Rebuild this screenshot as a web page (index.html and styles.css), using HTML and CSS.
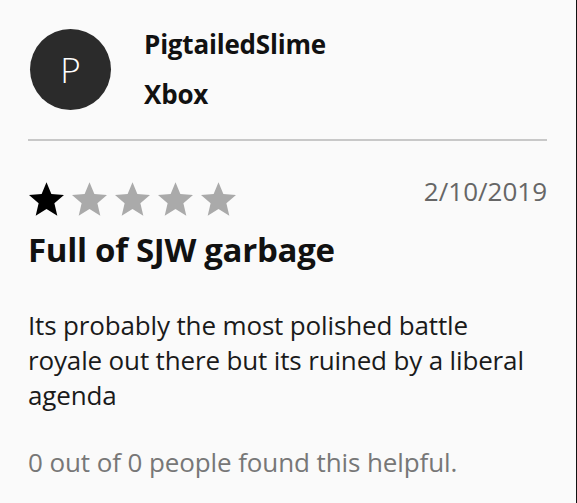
FILE: index.html
```html
<!DOCTYPE html>
<html lang="en">
<head>
  <meta charset="UTF-8">
  <title>Review</title>
  <link rel="stylesheet" href="styles.css">
</head>
<body>

<div class="review">
  <div class="author">
    <div class="avatar">P</div>
    <div class="author-info">
      <div class="name">PigtailedSlime</div>
      <div class="platform">Xbox</div>
    </div>
  </div>

  <hr class="divider">

  <div class="meta">
    <div class="stars">
      <svg class="star on" viewBox="0.489 0 19.022 18.09"><polygon points="10,0 12.645,6.359 19.511,6.91 14.28,11.391 15.878,18.09 10,14.5 4.122,18.09 5.72,11.391 0.489,6.91 7.355,6.359"/></svg>
      <svg class="star" viewBox="0.489 0 19.022 18.09"><polygon points="10,0 12.645,6.359 19.511,6.91 14.28,11.391 15.878,18.09 10,14.5 4.122,18.09 5.72,11.391 0.489,6.91 7.355,6.359"/></svg>
      <svg class="star" viewBox="0.489 0 19.022 18.09"><polygon points="10,0 12.645,6.359 19.511,6.91 14.28,11.391 15.878,18.09 10,14.5 4.122,18.09 5.72,11.391 0.489,6.91 7.355,6.359"/></svg>
      <svg class="star" viewBox="0.489 0 19.022 18.09"><polygon points="10,0 12.645,6.359 19.511,6.91 14.28,11.391 15.878,18.09 10,14.5 4.122,18.09 5.72,11.391 0.489,6.91 7.355,6.359"/></svg>
      <svg class="star" viewBox="0.489 0 19.022 18.09"><polygon points="10,0 12.645,6.359 19.511,6.91 14.28,11.391 15.878,18.09 10,14.5 4.122,18.09 5.72,11.391 0.489,6.91 7.355,6.359"/></svg>
    </div>
    <div class="date">2/10/2019</div>
  </div>

  <h3 class="title">Full of SJW garbage</h3>

  <p class="text">Its probably the most polished battle royale out there but its ruined by a liberal agenda</p>

  <p class="helpful">0 out of 0 people found this helpful.</p>
</div>

</body>
</html>
```

FILE: styles.css
```css
html, body {
  height: 100%;
}

body {
  margin: 0;
  background: #fafafa;
  border-right: 1px solid #111;
  box-sizing: border-box;
  font-family: 'Open Sans', 'Noto Sans', sans-serif;
  color: #111;
}

.review {
  padding: 29px 29px 0 28px;
}

.author {
  display: flex;
  align-items: flex-start;
  gap: 33px;
  padding-left: 2px;
}

.avatar {
  width: 81px;
  height: 81px;
  border-radius: 50%;
  background: #2b2b2b;
  color: #fff;
  font-size: 35px;
  font-weight: 300;
  display: flex;
  align-items: center;
  justify-content: center;
}

.author-info {
  display: flex;
  flex-direction: column;
  gap: 20px;
}

.name, .platform {
  font-size: 26px;
  line-height: 30px;
  font-weight: 700;
  letter-spacing: -0.2px;
}

.divider {
  border: none;
  border-top: 2px solid #c8c8c8;
  margin: 29px 0 0;
}

.meta {
  display: flex;
  justify-content: space-between;
  align-items: flex-start;
  margin-top: 35px;
}

.stars {
  display: flex;
  gap: 8px;
  margin-top: 6px;
  margin-left: 1px;
}

.star {
  width: 35px;
  height: 34px;
  fill: #aaa;
}

.star.on {
  fill: #000;
}

.date {
  font-size: 26px;
  line-height: 30px;
  color: #666;
}

.title {
  font-size: 33px;
  line-height: 40px;
  font-weight: 700;
  margin: 14px 0 0;
  letter-spacing: -0.3px;
}

.text {
  font-size: 26px;
  line-height: 35px;
  margin: 38px 0 0;
  max-width: 505px;
  letter-spacing: -0.15px;
  color: #1a1a1a;
}

.helpful {
  font-size: 26px;
  line-height: 35px;
  color: #777;
  letter-spacing: -0.1px;
  margin: 32px 0 0;
}
```
